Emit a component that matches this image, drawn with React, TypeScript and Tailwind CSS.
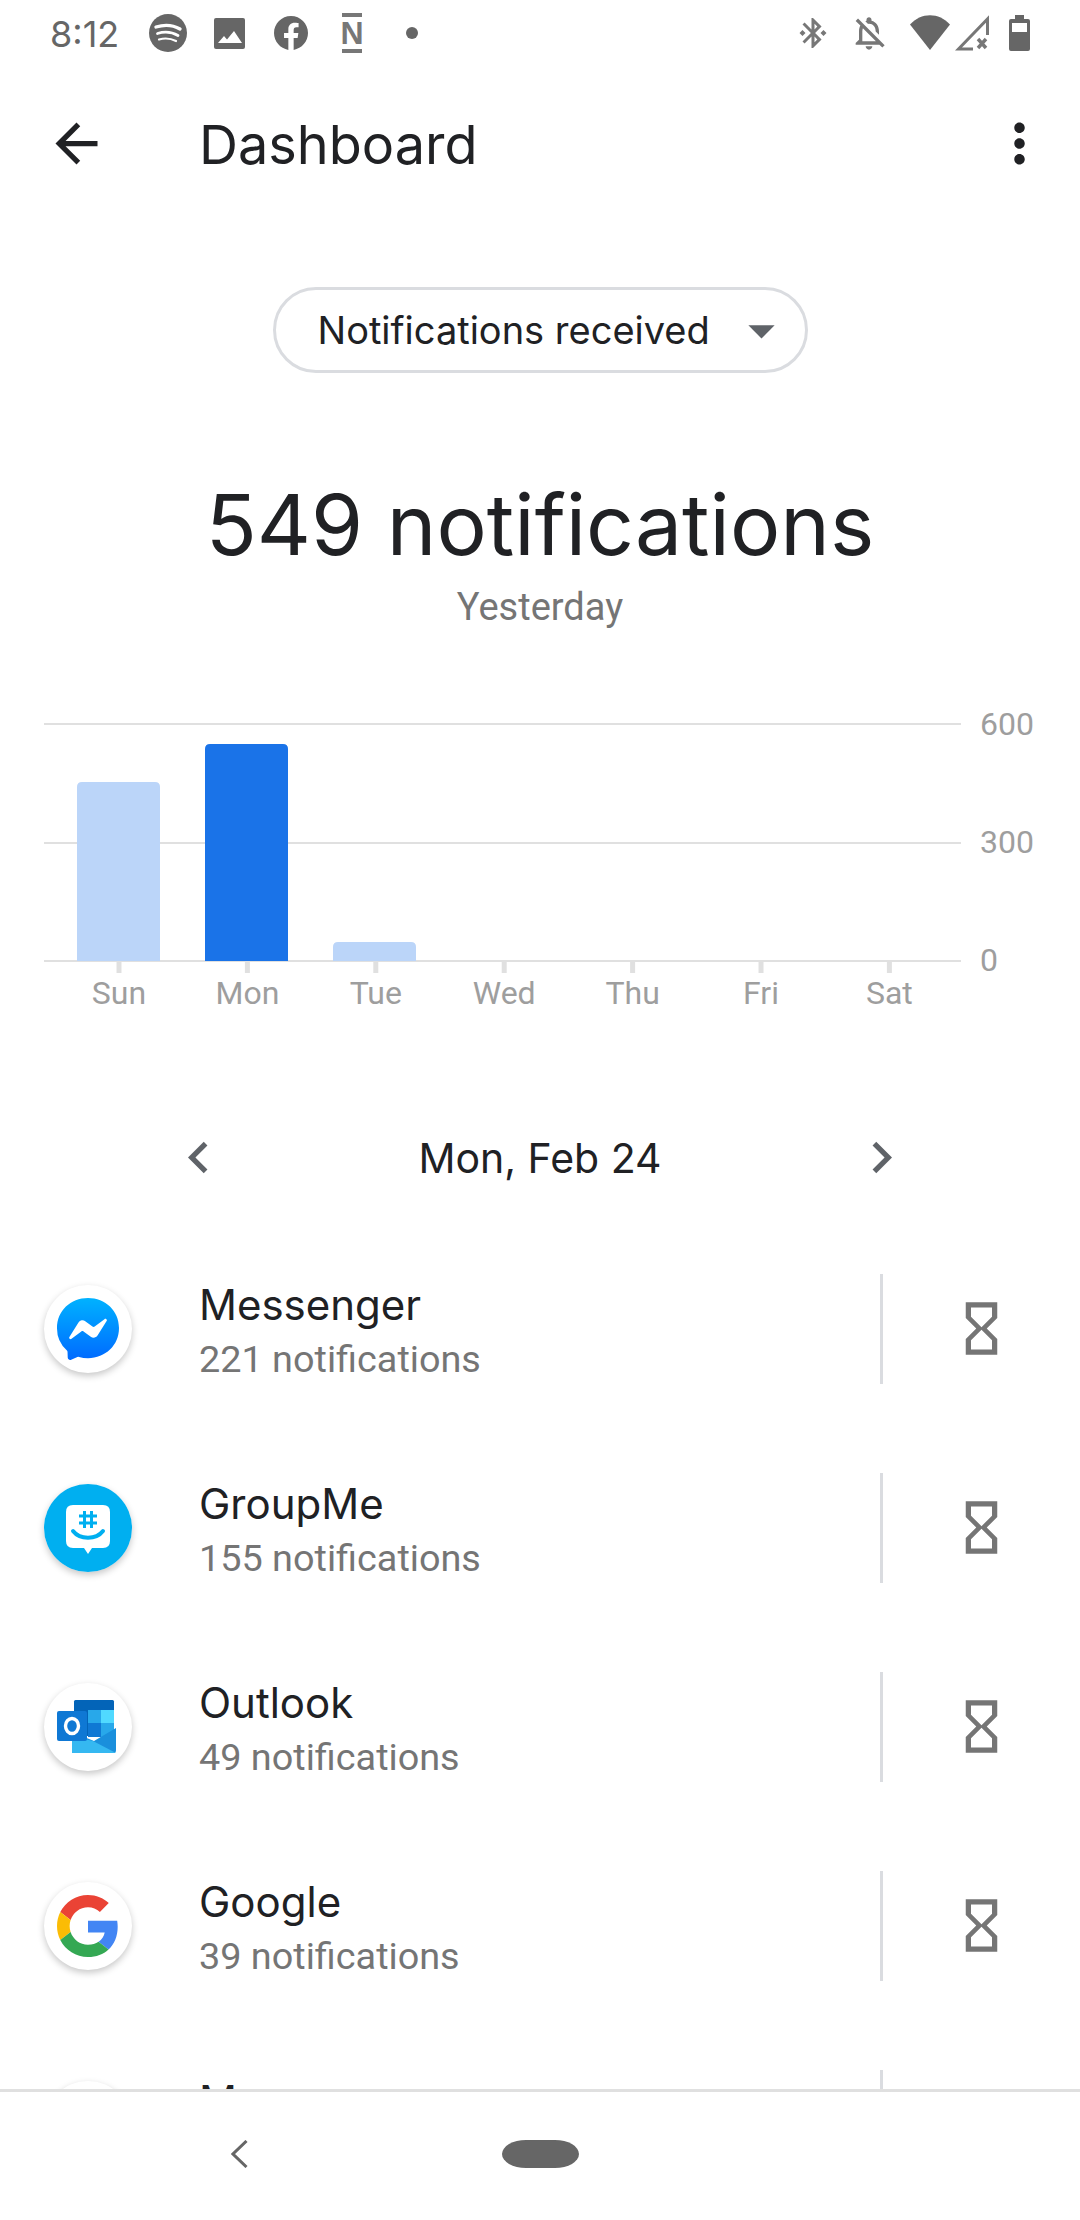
import { MdArrowBack, MdMoreVert, MdChevronLeft, MdChevronRight, MdArrowDropDown, MdHourglassEmpty } from 'react-icons/md'

const APPS = [
  { name: 'Messenger', count: '221 notifications', icon: <MessengerIcon /> },
  { name: 'GroupMe', count: '155 notifications', icon: <GroupMeIcon /> },
  { name: 'Outlook', count: '49 notifications', icon: <OutlookIcon /> },
  { name: 'Google', count: '39 notifications', icon: <GoogleIcon /> },
  { name: 'Messages', count: '30 notifications', icon: null },
]

const DAYS = ['Sun', 'Mon', 'Tue', 'Wed', 'Thu', 'Fri', 'Sat']

const BARS = [
  { x: 77, y: 81, color: '#bbd5f9' },
  { x: 205, y: 43, color: '#1a73e8' },
  { x: 333, y: 241, color: '#bbd5f9' },
]

export default function App() {
  return (
    <div className="flex h-[2220px] w-[1080px] flex-col overflow-hidden bg-white font-['Inter','Noto_Sans',sans-serif] text-[#202124]">
      <StatusBar />

      <main className="min-h-0 flex-1 overflow-hidden">
        {/* Toolbar */}
        <div className="flex h-[154px] items-center">
          <MdArrowBack className="ml-[45px] h-[63px] w-[63px] text-[#202124]" />
          <h1 className="ml-[91px] flex-1 pt-[3px] text-[54px] leading-none font-normal">Dashboard</h1>
          <MdMoreVert className="mr-[29px] h-[63px] w-[63px] text-[#202124]" />
        </div>

        {/* Metric picker */}
        <div className="mt-[67px] flex justify-center">
          <div className="flex h-[86px] w-[535px] items-center rounded-full border-[3px] border-[#dadce0] pl-[42px]">
            <span className="text-[38px] leading-none">Notifications received</span>
            <MdArrowDropDown className="ml-[20px] h-[63px] w-[63px] text-[#5f6368]" />
          </div>
        </div>

        {/* Total */}
        <div className="mt-[102px] text-center text-[84px] leading-[100px]">549 notifications</div>
        <div className="mt-[10px] text-center font-['Roboto',sans-serif] text-[38px] leading-[44px] text-[#757575]">Yesterday</div>

        <Chart />

        {/* Day picker */}
        <div className="mt-[96px] flex h-[80px] items-center justify-center">
          <MdChevronLeft className="h-[63px] w-[63px] text-[#5f6368]" />
          <span className="w-[620px] pt-[2px] text-center text-[41px] leading-none">Mon, Feb 24</span>
          <MdChevronRight className="h-[63px] w-[63px] text-[#5f6368]" />
        </div>

        {/* App list */}
        <div className="mt-[32px]">
          {APPS.map((app) => (
            <div key={app.name} className="flex h-[199px] items-center">
              <div className="ml-[44px] flex h-[88px] w-[88px] shrink-0 items-center justify-center rounded-full bg-white shadow-[0_3px_7px_rgba(0,0,0,0.22)]">
                {app.icon}
              </div>
              <div className="ml-[67px] flex-1 pt-[6px]">
                <div className="text-[42px] leading-[55px]">{app.name}</div>
                <div className="font-['Roboto',sans-serif] text-[37.8px] leading-[55px] text-[#757575]">{app.count}</div>
              </div>
              <div className="h-[110px] w-[3px] bg-[#dadce0]" />
              <div className="flex w-[197px] justify-center">
                <MdHourglassEmpty className="h-[63px] w-[63px] text-[#757575]" />
              </div>
            </div>
          ))}
        </div>
      </main>

      {/* Navigation bar */}
      <footer className="flex h-[131px] shrink-0 items-center border-t-[3px] border-[#e0e0e0] pb-[4px] pl-[231px]">
        <svg width="17" height="28" viewBox="0 0 17 28" fill="none" stroke="#666" strokeWidth="3">
          <path d="M15.5 1 L2 14 L15.5 27" />
        </svg>
        <div className="ml-[254px] h-[28px] w-[77px] rounded-[24px/14px] bg-[#666]" />
      </footer>
    </div>
  )
}

function StatusBar() {
  return (
    <div className="flex h-[66px] shrink-0 items-center pl-[50px] text-[#666]">
      <span className="w-[68px] pt-[2px] text-[36px] leading-none">8:12</span>
      <svg className="ml-[31px]" width="38" height="38" viewBox="0 0 38 38">
        <circle cx="19" cy="19" r="19" fill="#666" />
        <g fill="none" stroke="#fff" strokeLinecap="round">
          <path d="M7 13 C15 10.5 24 11 31 15" strokeWidth="3.4" />
          <path d="M8.5 19.5 C15 17.5 23 18 29 21.5" strokeWidth="2.8" />
          <path d="M10 25.5 C15 24 22 24.5 27 27" strokeWidth="2.2" />
        </g>
      </svg>
      <svg className="ml-[27px]" width="31" height="31" viewBox="0 0 31 31">
        <rect width="31" height="31" rx="2" fill="#666" />
        <path d="M4 25 L10 18 L13 21.5 L20 13 L28 25 Z" fill="#fff" />
      </svg>
      <svg className="ml-[29px]" width="34" height="34" viewBox="0 0 24 24" fill="#666">
        <path d="M24 12.073c0-6.627-5.373-12-12-12s-12 5.373-12 12c0 5.99 4.388 10.954 10.125 11.854v-8.385H7.078v-3.47h3.047V9.43c0-3.007 1.792-4.669 4.533-4.669 1.312 0 2.686.235 2.686.235v2.953H15.83c-1.491 0-1.956.925-1.956 1.874v2.25h3.328l-.532 3.47h-2.796v8.385C19.612 23.027 24 18.062 24 12.073z" />
      </svg>
      <div className="ml-[34px] flex w-[20px] flex-col items-center">
        <div className="h-[4px] w-[20px] bg-[#777]" />
        <span className="font-['Liberation_Sans',sans-serif] text-[32px] leading-[32px] font-bold text-[#777]">N</span>
        <div className="h-[4px] w-[20px] bg-[#777]" />
      </div>
      <div className="ml-[44px] h-[12px] w-[12px] rounded-full bg-[#666]" />

      <div className="flex-1" />
      <svg width="36" height="36" viewBox="0 0 24 24" fill="#777">
        <path d="M7 12l-2-2-2 2 2 2 2-2zm10.71-4.29L12 2h-1v7.59L6.41 5 5 6.41 10.59 12 5 17.59 6.41 19 11 14.41V22h1l5.71-5.71-4.3-4.29 4.3-4.29zM13 5.83l1.88 1.88L13 9.59V5.83zm1.88 10.46L13 18.17v-3.76l1.88 1.88zM19 10l-2 2 2 2 2-2-2-2z" />
      </svg>
      <svg className="ml-[18px]" width="40" height="40" viewBox="0 0 24 24" fill="#777">
        <path d="M12 22c1.1 0 2-.9 2-2h-4c0 1.1.9 2 2 2zM12 6.5c2.49 0 4 2.02 4 4.5v.1l2 2V11c0-3.07-1.63-5.64-4.5-6.32V4c0-.83-.67-1.5-1.5-1.5s-1.5.67-1.5 1.5v.68c-.24.06-.47.15-.69.23l1.64 1.64c.18-.02.36-.05.55-.05zM5.41 3.35L4 4.76l2.81 2.81C6.29 8.57 6 9.74 6 11v5l-2 2v1h14.24l1.74 1.74 1.41-1.41L5.41 3.35zM16 17H8v-6c0-.68.12-1.32.34-1.9L16 16.76V17z" />
      </svg>
      <svg className="ml-[21px]" width="40" height="36" viewBox="0 0 40 36">
        <path d="M0 9.5 C11 -3 29 -3 40 9.5 L20 35 Z" fill="#666" />
      </svg>
      <svg className="ml-[5px]" width="34" height="36" viewBox="0 0 34 36" fill="none" stroke="#777" strokeWidth="3">
        <path d="M32.5 20 V4 L3.5 34 H18" />
        <path d="M23 24 L31 33 M31 24 L23 33" strokeWidth="3.4" />
      </svg>
      <svg className="ml-[20px] mr-[50px]" width="21" height="36" viewBox="0 0 21 36">
        <path d="M6 0 H15 V4 H19 Q21 4 21 6 V34 Q21 36 19 36 H2 Q0 36 0 34 V6 Q0 4 2 4 H6 Z" fill="#666" />
        <rect x="3" y="8" width="15" height="9" fill="#fff" />
      </svg>
    </div>
  )
}

function Chart() {
  return (
    <svg className="mt-[72px] block" width="1080" height="320" viewBox="0 0 1080 320">
      <g stroke="#e0e0e0" strokeWidth="2">
        <line x1="44" x2="961" y1="23" y2="23" />
        <line x1="44" x2="961" y1="142" y2="142" />
        <line x1="44" x2="961" y1="260" y2="260" />
        {DAYS.map((d, i) => (
          <line key={d} x1={119 + i * 128.4} x2={119 + i * 128.4} y1="260" y2="272" strokeWidth="5" />
        ))}
      </g>
      {BARS.map((b) => (
        <path
          key={b.x}
          d={`M${b.x} 260 V${b.y + 5} Q${b.x} ${b.y} ${b.x + 5} ${b.y} H${b.x + 78} Q${b.x + 83} ${b.y} ${b.x + 83} ${b.y + 5} V260 Z`}
          fill={b.color}
        />
      ))}
      <g fill="#9e9e9e" fontSize="32" className="font-['Roboto',sans-serif]">
        <text x="980" y="34">600</text>
        <text x="980" y="152">300</text>
        <text x="980" y="270">0</text>
        {DAYS.map((d, i) => (
          <text key={d} x={119 + i * 128.4} y="303" textAnchor="middle">{d}</text>
        ))}
      </g>
    </svg>
  )
}

function MessengerIcon() {
  return (
    <svg width="62" height="62" viewBox="0 0 24 24">
      <defs>
        <linearGradient id="msgr" x1="0" y1="0" x2="0" y2="1">
          <stop offset="0" stopColor="#00b2ff" />
          <stop offset="1" stopColor="#006aff" />
        </linearGradient>
      </defs>
      <path
        fill="url(#msgr)"
        d="M.001 11.639C.001 4.949 5.241 0 12.001 0S24 4.95 24 11.639c0 6.689-5.24 11.638-12 11.638-1.21 0-2.38-.16-3.47-.46a.96.96 0 00-.64.05l-2.39 1.05a.96.96 0 01-1.35-.85l-.07-2.14a.97.97 0 00-.32-.68A11.39 11.389 0 01.002 11.64zm8.32-2.19l-3.52 5.6c-.35.53.32 1.139.82.75l3.79-2.87c.26-.2.6-.2.87 0l2.8 2.1c.84.63 2.04.4 2.6-.48l3.52-5.6c.35-.53-.32-1.13-.82-.75l-3.79 2.87c-.25.2-.6.2-.86 0l-2.8-2.1a1.8 1.8 0 00-2.61.48z"
      />
    </svg>
  )
}

function GroupMeIcon() {
  return (
    <svg width="88" height="88" viewBox="0 0 88 88">
      <circle cx="44" cy="44" r="44" fill="#00aff0" />
      <path d="M29 21 H59 Q66 21 66 28 V57 Q66 64 59 64 H48 L44 70 L40 64 H29 Q22 64 22 57 V28 Q22 21 29 21 Z" fill="#fff" />
      <g stroke="#00aff0" strokeWidth="3" fill="none">
        <path d="M40.5 27 V44 M47.5 27 V44 M35 32 H53 M35 39 H53" />
        <path d="M29 47 C36 56 52 56 59 47" strokeWidth="4" strokeLinecap="round" />
      </g>
    </svg>
  )
}

function OutlookIcon() {
  return (
    <svg width="62" height="54" viewBox="0 0 62 54">
      <rect x="17" y="0" width="40" height="12" rx="1.5" fill="#0364b8" />
      <rect x="17" y="10" width="14" height="26" fill="#0364b8" />
      <rect x="31" y="10" width="13" height="13" fill="#28a8ea" />
      <rect x="44" y="10" width="13" height="13" fill="#50d9ff" />
      <rect x="31" y="23" width="13" height="14" fill="#0f78d4" />
      <rect x="44" y="23" width="13" height="14" fill="#28a8ea" />
      <path d="M15 32 L37 41 L59 28 V50 Q59 53 57 53 H17 Q15 53 15 50 Z" fill="#1a8fdc" />
      <path d="M15 53 V36 L36 41 L59 53 Z" fill="#35b8f1" />
      <rect x="0" y="11" width="30" height="30" rx="2" fill="#0f78d4" />
      <ellipse cx="15" cy="26" rx="6.5" ry="7.5" fill="none" stroke="#fff" strokeWidth="3.4" />
    </svg>
  )
}

function GoogleIcon() {
  return (
    <svg width="62" height="64" viewBox="0 0 48 48">
      <path fill="#EA4335" d="M24 9.5c3.54 0 6.71 1.22 9.21 3.6l6.85-6.85C35.9 2.38 30.47 0 24 0 14.62 0 6.51 5.38 2.56 13.22l7.98 6.19C12.43 13.72 17.74 9.5 24 9.5z" />
      <path fill="#4285F4" d="M46.98 24.55c0-1.57-.15-3.09-.38-4.55H24v9.02h12.94c-.58 2.96-2.26 5.48-4.78 7.18l7.73 6c4.51-4.18 7.09-10.36 7.09-17.65z" />
      <path fill="#FBBC05" d="M10.53 28.59c-.48-1.45-.76-2.99-.76-4.59s.27-3.14.76-4.59l-7.98-6.19C.92 16.46 0 20.12 0 24c0 3.88.92 7.54 2.56 10.78l7.97-6.19z" />
      <path fill="#34A853" d="M24 48c6.48 0 11.93-2.13 15.89-5.81l-7.73-6c-2.15 1.45-4.92 2.3-8.16 2.3-6.26 0-11.57-4.22-13.47-9.91l-7.98 6.19C6.51 42.62 14.62 48 24 48z" />
    </svg>
  )
}
